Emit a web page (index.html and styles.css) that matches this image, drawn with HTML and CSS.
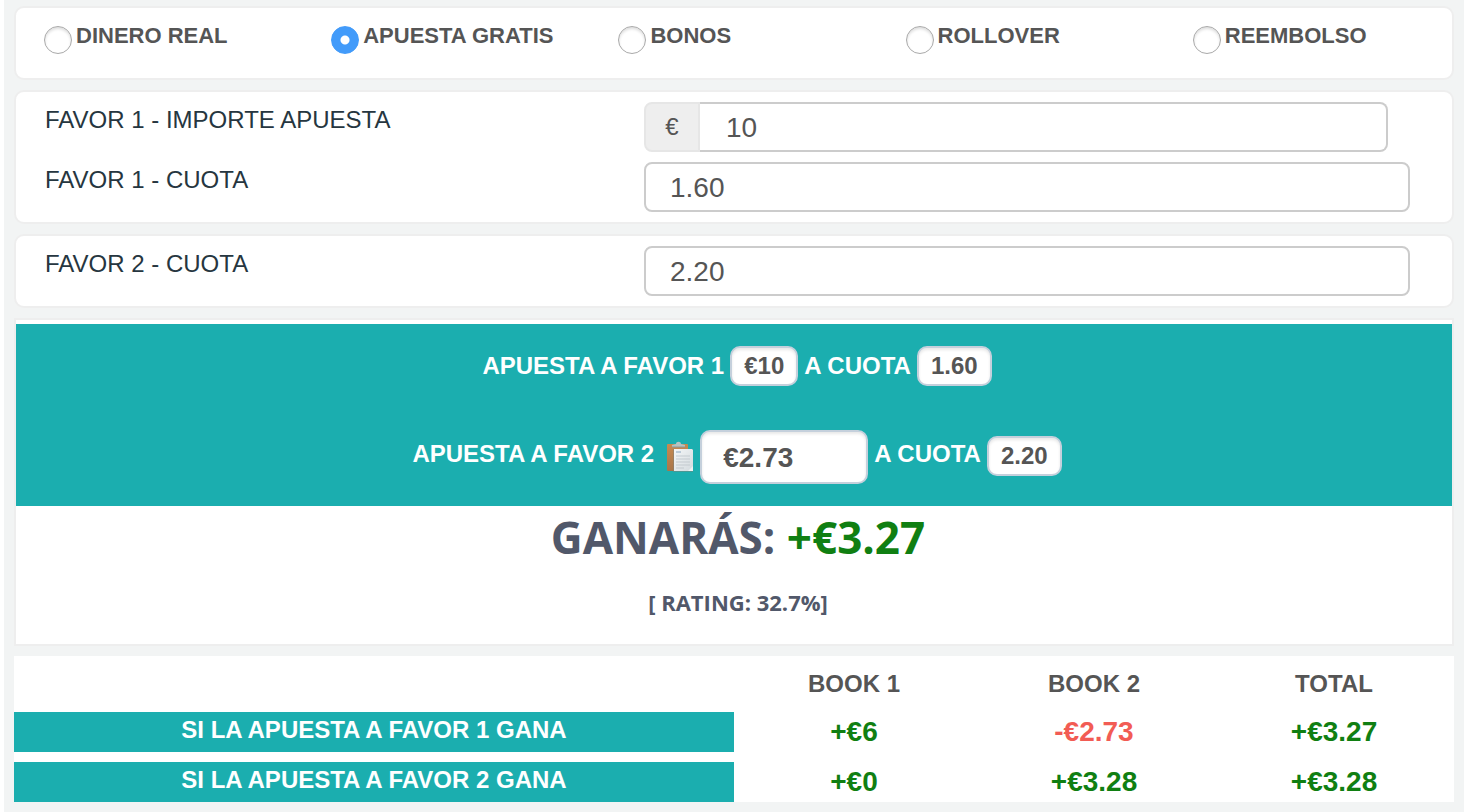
FILE: index.html
```html
<!DOCTYPE html>
<html lang="es">
<head>
<meta charset="utf-8">
<title>Calculadora de apuestas</title>
<link rel="stylesheet" href="styles.css">
</head>
<body>
<main class="calculator">
  <form class="form">
    <div class="card modes" role="radiogroup" aria-label="Tipo de apuesta">
      <label class="mode"><input type="radio" name="modo">DINERO REAL</label>
      <label class="mode"><input type="radio" name="modo" checked>APUESTA GRATIS</label>
      <label class="mode"><input type="radio" name="modo">BONOS</label>
      <label class="mode"><input type="radio" name="modo">ROLLOVER</label>
      <label class="mode"><input type="radio" name="modo">REEMBOLSO</label>
    </div>
    <div class="card fields">
      <div class="field">
        <label class="field-label" for="importe">FAVOR 1 - IMPORTE APUESTA</label>
        <div class="input-group">
          <span class="addon">€</span>
          <input class="control" id="importe" type="text" value="10">
        </div>
      </div>
      <div class="field">
        <label class="field-label" for="cuota1">FAVOR 1 - CUOTA</label>
        <input class="control" id="cuota1" type="text" value="1.60">
      </div>
    </div>
    <div class="card fields">
      <div class="field">
        <label class="field-label" for="cuota2">FAVOR 2 - CUOTA</label>
        <input class="control" id="cuota2" type="text" value="2.20">
      </div>
    </div>
  </form>
  <section class="result">
    <div class="banner">
      <div class="bet">
        <span>APUESTA A FAVOR 1</span>
        <span class="badge">€10</span>
        <span>A CUOTA</span>
        <span class="badge">1.60</span>
      </div>
      <div class="bet bet-second">
        <label class="bet-text" for="apuesta2">APUESTA A FAVOR 2</label>
        <button class="copy" type="button" aria-label="Copiar">
          <svg width="28" height="32" viewBox="0 0 28 32" aria-hidden="true">
            <defs>
              <linearGradient id="board" x1="0" y1="0" x2="0" y2="1"><stop offset="0" stop-color="#c78a50"/><stop offset="1" stop-color="#a8754a"/></linearGradient>
              <linearGradient id="sheet" x1="0" y1="0" x2="1" y2="1"><stop offset="0" stop-color="#f4f6f7"/><stop offset="1" stop-color="#d3dade"/></linearGradient>
            </defs>
            <rect x="1" y="3" width="21" height="27" rx="1" fill="url(#board)"/>
            <path d="M6 6V4l4-1c0-3 5-3 5 0l4 1v2z" fill="#b5c2c2"/>
            <path d="M6 6h13" stroke="#8d9896"/>
            <rect x="7" y="8" width="20" height="23" fill="#7b8179" opacity=".5"/>
            <path d="M8 8h18l1 1v21H8z" fill="url(#sheet)"/>
            <path d="M10 11h5" stroke="#8aa6c0"/>
            <path d="M10 15h14M10 18h14M10 21h14M10 24h14M10 27h8" stroke="#c3cacf"/>
            <path d="M22 30l5-5v5z" fill="#eef1f2"/>
          </svg>
        </button>
        <input class="stake" id="apuesta2" type="text" value="€2.73">
        <span class="bet-text">A CUOTA</span>
        <span class="badge">2.20</span>
      </div>
    </div>
    <h1 class="profit">GANARÁS: <span class="gain">+€3.27</span></h1>
    <p class="rating">[ RATING: 32.7%]</p>
  </section>
  <table class="outcomes">
    <thead>
      <tr><td></td><th scope="col">BOOK 1</th><th scope="col">BOOK 2</th><th scope="col">TOTAL</th></tr>
    </thead>
    <tbody>
      <tr><th scope="row">SI LA APUESTA A FAVOR 1 GANA</th><td class="gain">+€6</td><td class="loss">-€2.73</td><td class="gain">+€3.27</td></tr>
      <tr><th scope="row">SI LA APUESTA A FAVOR 2 GANA</th><td class="gain">+€0</td><td class="gain">+€3.28</td><td class="gain">+€3.28</td></tr>
    </tbody>
  </table>
</main>
</body>
</html>
```
FILE: styles.css
```css
* { box-sizing: border-box; }

body {
  margin: 0;
  background: #fff;
  color: #555;
  font: 24px/32px "Liberation Sans", Arial, sans-serif;
}

input, button { font: inherit; color: inherit; margin: 0; }

.calculator {
  margin: 0 8px 0 4px;
  padding: 6px 10px 10px;
  background: #f2f4f4;
  display: flex;
  flex-direction: column;
  gap: 10px;
}

.form { display: flex; flex-direction: column; gap: 10px; }

.card {
  background: #fff;
  border: 2px solid #eee;
  border-radius: 10px;
}

.modes {
  display: grid;
  grid-template-columns: repeat(5, 1fr);
  padding: 12px 0 24px;
}

.mode {
  display: flex;
  gap: 4px;
  padding-left: 28px;
  font-size: 22px;
  font-weight: bold;
}

.mode input {
  appearance: none;
  flex: none;
  width: 28px;
  height: 28px;
  margin-top: 6px;
  border: 1px solid #aaa;
  border-radius: 50%;
  background: #fff;
  box-shadow: inset 0 2px 3px #ddd;
}

.mode input:checked {
  border-color: #429bfa;
  background: radial-gradient(circle, #fff 4px, #429bfa 5px);
  box-shadow: none;
}

.fields {
  display: flex;
  flex-direction: column;
  gap: 10px;
  padding: 10px 42px 10px 29px;
}

.field {
  display: grid;
  grid-template-columns: 599fr 766fr;
  align-items: start;
}

.field-label { padding-top: 2px; color: #263640; }

.control {
  width: 100%;
  height: 50px;
  padding: 2px 24px 0;
  border: 2px solid #ccc;
  border-radius: 8px;
  background: #fff;
  font-size: 28px;
}

.input-group { display: flex; margin-right: 22px; }

.addon {
  flex: none;
  width: 56px;
  padding: 7px 0;
  border: 2px solid #e6e6e6;
  border-radius: 8px 0 0 8px;
  background: #eee;
  text-align: center;
}

.input-group .control {
  padding-left: 26px;
  border-left: 0;
  border-radius: 0 8px 8px 0;
}

.result {
  padding: 4px 0 26px;
  border: 2px solid #eee;
  background: #fff;
  color: #51586a;
  text-align: center;
}

.banner {
  padding: 22px 0;
  background: #1baeaf;
  color: #fff;
  font-weight: bold;
}

.bet {
  display: flex;
  justify-content: center;
  align-items: center;
  gap: 6px;
  padding-left: 6px;
}

.bet-second { margin-top: 44px; }

.bet-text { padding-bottom: 6px; }

.badge, .stake {
  border: 2px solid #c5d0dc;
  border-radius: 10px;
  background: #fff;
  color: #555;
  box-shadow: inset 0 2px 3px #e8e8e8;
}

.badge { padding: 2px 12px; }

.bet-second .badge { margin-bottom: 2px; }

.stake {
  width: 168px;
  height: 54px;
  padding: 2px 21px 0;
  font-size: 28px;
  font-weight: bold;
}

.copy {
  display: flex;
  margin-left: 6px;
  padding: 0;
  border: 0;
  background: none;
}

.profit, .rating {
  margin: 0;
  padding-left: 8px;
  font-family: "Open Sans", sans-serif;
  font-weight: bold;
}

.profit { font-size: 44px; line-height: 62px; }

.rating { margin-top: 18px; font-size: 22px; }

.gain { color: #107f12; }
.loss { color: #f25c54; }

.outcomes {
  width: 100%;
  table-layout: fixed;
  border-spacing: 0;
  background: #fff;
  font-weight: bold;
  text-align: center;
}

.outcomes td, .outcomes th { padding: 0; }

.outcomes thead td { width: 50%; }

.outcomes thead th { height: 56px; }

.outcomes tbody td { height: 40px; font-size: 28px; }

.outcomes tbody th {
  padding-bottom: 4px;
  background: #1baeaf padding-box;
  color: #fff;
}

.outcomes tbody tr + tr > * { height: 50px; border-top: 10px solid transparent; }
```
